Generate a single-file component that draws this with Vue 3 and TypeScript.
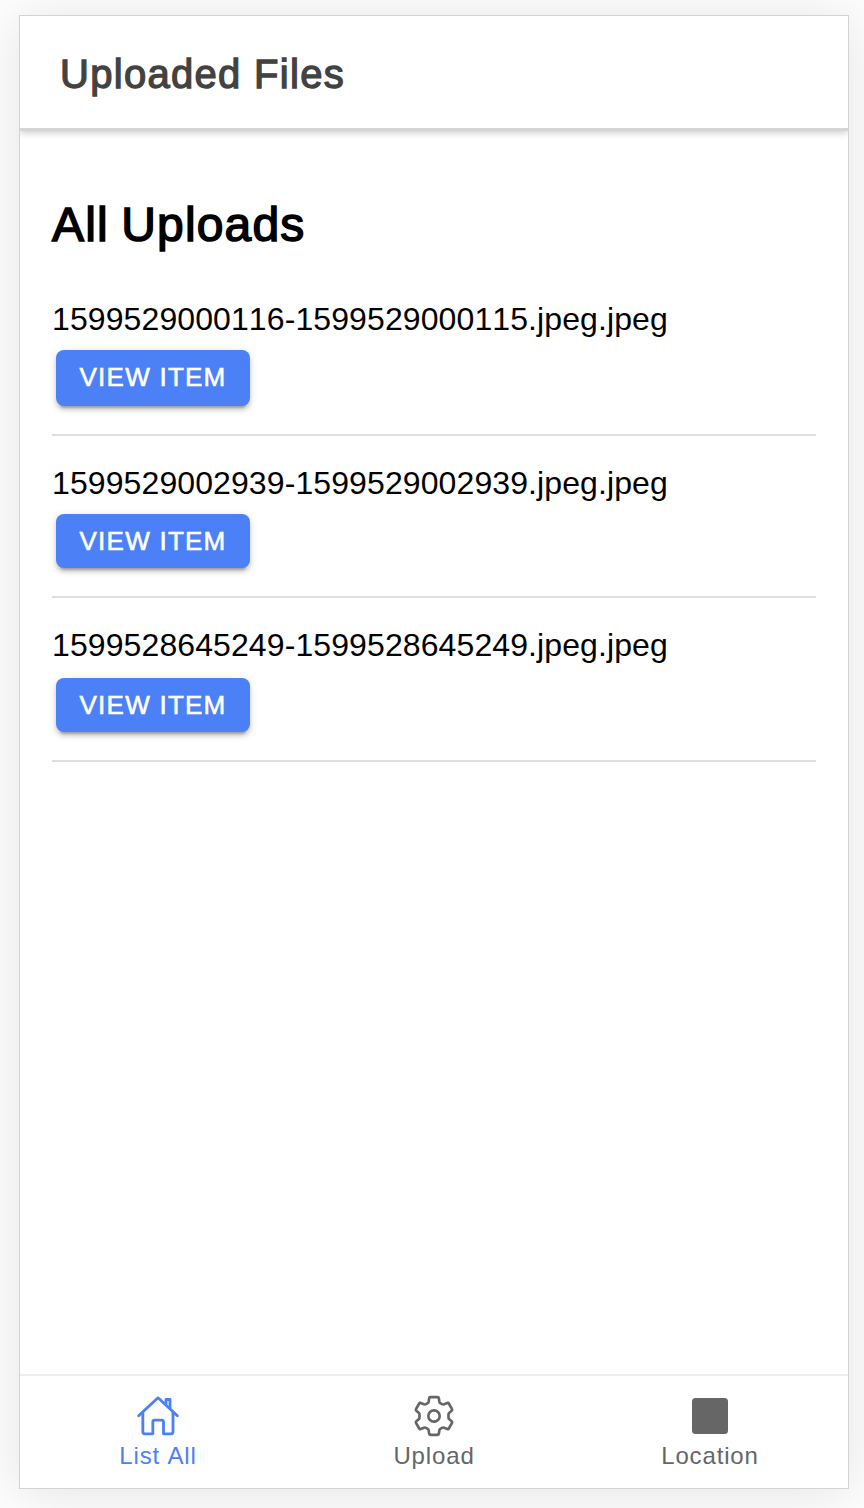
<script setup lang="ts">
interface Upload {
  name: string
}

const uploads: Upload[] = [
  { name: '1599529000116-1599529000115.jpeg.jpeg' },
  { name: '1599529002939-1599529002939.jpeg.jpeg' },
  { name: '1599528645249-1599528645249.jpeg.jpeg' },
]
</script>

<template>
  <div class="stage">
    <div class="device">
      <header class="toolbar">
        <h1 class="title">Uploaded Files</h1>
      </header>

      <main class="content">
        <h2 class="heading">All Uploads</h2>
        <ul class="list">
          <li v-for="item in uploads" :key="item.name" class="item">
            <span class="name">{{ item.name }}</span>
            <button class="view" type="button"><span class="view-label">VIEW ITEM</span></button>
          </li>
        </ul>
      </main>

      <nav class="tabs">
        <a class="tab active">
          <svg class="icon" viewBox="102 96 144 144" fill="none" stroke="currentColor" stroke-width="8.500" stroke-linecap="round" stroke-linejoin="round">
            <path d="M116 167.500L171.500 115.500Q174 113 176.500 115.500L232 167.500" />
            <path d="M128.500 158V215.500Q128.500 221.500 134.500 221.500H158.500V186Q158.500 180.500 164 180.500H185Q190.500 180.500 190.500 186V221.500H213Q219 221.500 219 215.500V158" />
            <path d="M198 131V118.500H210V143" />
          </svg>
          <span class="tab-label">List All</span>
        </a>
        <a class="tab">
          <svg class="icon" viewBox="108 96 144 144" fill="none" stroke="currentColor" stroke-width="8" stroke-linecap="round" stroke-linejoin="round">
            <path d="M169 111.500H191Q194 111.500 194.500 114.500L196 125Q196.500 128 199 129.500L204 132.500Q207 134 210 133L220 129Q223 128 224.500 130.500L234 147.500Q235.500 150 233 152L226 158Q223.500 160 223.500 163V173Q223.500 176 226 178L233 184Q235.500 186 234 188.500L224.500 205.500Q223 208 220 207L210 203Q207 202 204 203.500L199 206.500Q196.500 208 196 211L194.500 221.500Q194 224.500 191 224.500H169Q166 224.500 165.500 221.500L164 211Q163.500 208 161 206.500L156 203.500Q153 202 150 203L140 207Q137 208 135.500 205.500L126 188.500Q124.500 186 127 184L134 178Q136.500 176 136.500 173V163Q136.500 160 134 158L127 152Q124.500 150 126 147.500L135.500 130.500Q137 128 140 129L150 133Q153 134 156 132.500L161 129.500Q163.500 128 164 125L165.500 114.500Q166 111.500 169 111.500Z" />
            <circle cx="180" cy="168" r="17" />
          </svg>
          <span class="tab-label">Upload</span>
        </a>
        <a class="tab">
          <svg class="icon" viewBox="0 0 48 48" fill="currentColor">
            <rect x="6" y="6" width="36" height="36" rx="3.500" />
          </svg>
          <span class="tab-label">Location</span>
        </a>
      </nav>
    </div>
  </div>
</template>

<style>
body {
  margin: 0;
  background: #fdfdfd;
}
</style>

<style scoped>
.stage {
  box-sizing: border-box;
  width: 864px;
  height: 1508px;
  padding: 15px 15px 19px 19px;
  overflow: hidden;
  font-family: 'Liberation Sans', Arial, sans-serif;
  font-kerning: none;
}

.device {
  box-sizing: border-box;
  display: flex;
  flex-direction: column;
  width: 830px;
  height: 1474px;
  border: 1px solid #d3d3d3;
  background: #fff;
  box-shadow: 0 4px 50px rgba(0, 0, 0, 0.1);
}

.toolbar {
  display: flex;
  align-items: center;
  flex: none;
  height: 112px;
  padding: 0 40px;
  position: relative;
  background: #fff;
  box-shadow: 0 3px 0 #d5d5d5, 0 5px 7px rgba(0, 0, 0, 0.2);
  clip-path: inset(0 0 -14px 0);
}

.title {
  margin: 4px 0 0;
  font-size: 40px;
  font-weight: 400;
  line-height: 48px;
  letter-spacing: 1.3px;
  color: #424242;
  -webkit-text-stroke: 1.3px #424242;
}

.content {
  flex: 1;
  padding: 0 32px;
}

.heading {
  margin: 68px 0 18px;
  font-size: 48px;
  font-weight: 400;
  line-height: 58px;
  letter-spacing: 1.15px;
  word-spacing: -2px;
  color: #000;
  -webkit-text-stroke: 1.5px #000;
}

.list {
  margin: 0;
  padding: 0;
  list-style: none;
}

.item {
  box-sizing: border-box;
  display: flex;
  flex-direction: column;
  align-items: flex-start;
  height: 164px;
  padding-top: 28px;
  border-bottom: 2px solid #dedede;
}

.item:nth-child(2) {
  height: 162px;
}

.name {
  height: 50px;
  font-size: 32px;
  line-height: 38px;
  letter-spacing: 0.1px;
  color: #000;
}

.item:nth-child(3) .name {
  height: 52px;
}

.view {
  display: flex;
  align-items: center;
  justify-content: center;
  width: 194px;
  height: 54px;
  margin: 0 4px;
  padding: 0;
  border: 0;
  border-radius: 8px;
  background: #4c80f7;
  box-shadow: 0 6px 2px -4px rgba(0, 0, 0, 0.2), 0 4px 4px rgba(0, 0, 0, 0.14), 0 2px 10px rgba(0, 0, 0, 0.12);
  font-family: inherit;
  color: #fff;
}

.item:first-child .view {
  height: 56px;
}

.item:first-child .view-label {
  margin-bottom: 2px;
}

.view-label {
  font-size: 26px;
  line-height: 30px;
  letter-spacing: 1.25px;
  white-space: nowrap;
  font-kerning: none;
  -webkit-text-stroke: 0.6px #fff;
}

.tabs {
  display: flex;
  flex: none;
  height: 112px;
  border-top: 2px solid #ededed;
}

.tab {
  display: flex;
  flex: 1;
  flex-direction: column;
  align-items: center;
  padding-top: 16px;
  color: #666;
}

.tab.active {
  color: #4c80f7;
}

.icon {
  flex: none;
  width: 48px;
  height: 48px;
}

.tab-label {
  margin-top: 2px;
  font-size: 24px;
  line-height: 28px;
  letter-spacing: 0.85px;
}
</style>
